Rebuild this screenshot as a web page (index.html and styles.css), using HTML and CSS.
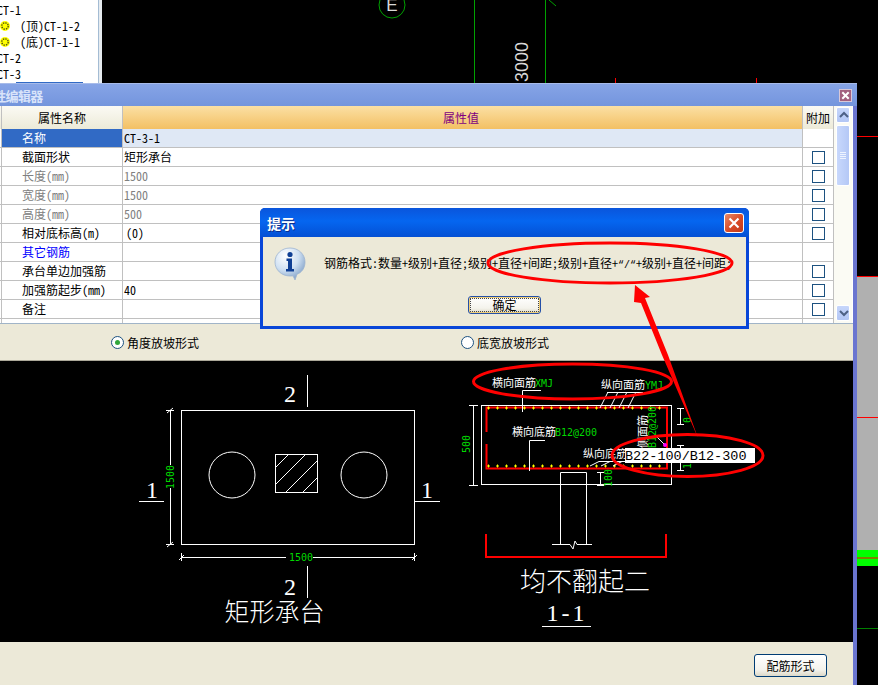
FILE: index.html
```html
<!DOCTYPE html>
<html lang="zh-CN">

<head>
    <meta charset="UTF-8">
    <meta name="viewport" content="width=device-width, initial-scale=1.0">
    <title>属性编辑器</title>
    <link rel="stylesheet" href="styles.css">
</head>

<body>
    <div class="desktop">
        <!-- 背景CAD -->
        <svg class="layer" viewBox="0 0 878 685">
            <circle class="bg-green" cx="392" cy="5" r="13" />
            <text class="bg-label" x="392" y="11" text-anchor="middle">E</text>
            <line class="bg-green" x1="474.5" y1="0" x2="474.5" y2="83" />
            <line class="bg-green" x1="545.5" y1="0" x2="545.5" y2="83" />
            <line class="bg-green" x1="549" y1="0" x2="556" y2="6" />
            <text class="bg-label big" transform="translate(528 82) rotate(-90)">3000</text>
            <line class="bg-red" x1="615.5" y1="78" x2="615.5" y2="83" />
            <line class="bg-red" x1="756.5" y1="78" x2="756.5" y2="83" />
            <line class="bg-red" x1="857" y1="136.5" x2="878" y2="136.5" />
            <rect x="857" y="276" width="21" height="274" fill="#b0b0b0" />
            <rect x="857" y="550" width="21" height="16" fill="#00ff00" />
            <line class="bg-red" x1="857" y1="276.5" x2="878" y2="276.5" />
            <line class="bg-red" x1="857" y1="417.5" x2="878" y2="417.5" />
            <line class="bg-red" x1="857" y1="558" x2="878" y2="558" />
            <line x1="857" y1="628.5" x2="878" y2="628.5" stroke="#008000" />
        </svg>

        <!-- 构件树 -->
        <div class="tree">
            <div class="tree-row">CT-1</div>
            <div class="tree-row child">
                <svg class="gear" viewBox="0 0 10 10">
                    <circle cx="5" cy="5" r="5" fill="#ffff00" />
                    <circle cx="5" cy="5" r="3.2" fill="none" stroke="#4a4a10" stroke-width="1.3" stroke-dasharray="1.5 1" />
                </svg>
                <span>(顶)CT-1-2</span>
            </div>
            <div class="tree-row child">
                <svg class="gear" viewBox="0 0 10 10">
                    <circle cx="5" cy="5" r="5" fill="#ffff00" />
                    <circle cx="5" cy="5" r="3.2" fill="none" stroke="#4a4a10" stroke-width="1.3" stroke-dasharray="1.5 1" />
                </svg>
                <span>(底)CT-1-1</span>
            </div>
            <div class="tree-row">CT-2</div>
            <div class="tree-row">CT-3</div>
            <div class="tree-selected"></div>
        </div>

        <!-- 属性编辑器窗口 -->
        <div class="editor">
            <div class="editor-title">
                <span class="editor-title-text">属性编辑器</span>
                <span class="editor-close">
                    <svg viewBox="0 0 12 12"><path d="M2.5 2.5l7 7M9.5 2.5l-7 7" /></svg>
                </span>
            </div>

            <div class="props">
                <table class="props-table">
                    <colgroup>
                        <col class="col-gutter">
                        <col class="col-name">
                        <col class="col-value">
                        <col class="col-extra">
                    </colgroup>
                    <tr class="head">
                        <th></th>
                        <th class="head-name">属性名称</th>
                        <th class="head-value">属性值</th>
                        <th class="head-extra">附加</th>
                    </tr>
                    <tr class="current">
                        <td></td>
                        <td class="name">名称</td>
                        <td class="value">CT-3-1</td>
                        <td class="extra"></td>
                    </tr>
                    <tr>
                        <td></td>
                        <td class="name">截面形状</td>
                        <td class="value">矩形承台</td>
                        <td class="extra"><span class="check"></span></td>
                    </tr>
                    <tr class="off">
                        <td></td>
                        <td class="name">长度(mm)</td>
                        <td class="value">1500</td>
                        <td class="extra"><span class="check"></span></td>
                    </tr>
                    <tr class="off">
                        <td></td>
                        <td class="name">宽度(mm)</td>
                        <td class="value">1500</td>
                        <td class="extra"><span class="check"></span></td>
                    </tr>
                    <tr class="off">
                        <td></td>
                        <td class="name">高度(mm)</td>
                        <td class="value">500</td>
                        <td class="extra"><span class="check"></span></td>
                    </tr>
                    <tr>
                        <td></td>
                        <td class="name">相对底标高(m)</td>
                        <td class="value indent">(0)</td>
                        <td class="extra"><span class="check"></span></td>
                    </tr>
                    <tr class="group">
                        <td></td>
                        <td class="name">其它钢筋</td>
                        <td class="value"></td>
                        <td class="extra"></td>
                    </tr>
                    <tr>
                        <td></td>
                        <td class="name">承台单边加强筋</td>
                        <td class="value"></td>
                        <td class="extra"><span class="check"></span></td>
                    </tr>
                    <tr>
                        <td></td>
                        <td class="name">加强筋起步(mm)</td>
                        <td class="value">40</td>
                        <td class="extra"><span class="check"></span></td>
                    </tr>
                    <tr>
                        <td></td>
                        <td class="name">备注</td>
                        <td class="value"></td>
                        <td class="extra"><span class="check"></span></td>
                    </tr>
                    <tr class="tail">
                        <td></td>
                        <td></td>
                        <td></td>
                        <td></td>
                    </tr>
                </table>
                <div class="scrollbar">
                    <span class="scroll-btn">
                        <svg viewBox="0 0 14 14"><path d="M3 9l4-4 4 4" /></svg>
                    </span>
                    <span class="scroll-thumb"><i></i><i></i><i></i><i></i></span>
                    <span class="scroll-track"></span>
                    <span class="scroll-btn">
                        <svg viewBox="0 0 14 14"><path d="M3 5l4 4 4-4" /></svg>
                    </span>
                </div>
            </div>

            <div class="radios">
                <label class="radio-opt"><span class="radio on"></span>角度放坡形式</label>
                <label class="radio-opt"><span class="radio"></span>底宽放坡形式</label>
            </div>

            <div class="cad">
                <svg class="cad-svg" viewBox="0 361 853 281">
                    <!-- 左图 矩形承台 -->
                    <g class="wire">
                        <rect x="181.5" y="410.5" width="233" height="134" />
                        <circle cx="232" cy="475" r="23" />
                        <circle cx="364" cy="475" r="23" />
                        <rect x="275.5" y="454.5" width="42" height="38" />
                        <path d="M275 468L289 454M275 485L306 454M286 492L318 460M303 492L318 477" />
                        <path d="M307.5 375V407M307.5 566V598" />
                        <path d="M139 501.5H164M415 501.5H440" />
                        <path d="M170.5 410V465M170.5 488V544M166 410.5H174M166 544.5H174M167 413L173 408M167 547L173 542" />
                        <path d="M181 557.5H286M313 557.5H414M181.5 553V561M414.5 553V561M179 560L184 555M412 560L417 555" />
                    </g>
                    <text class="num" x="290" y="402" text-anchor="middle">2</text>
                    <text class="num" x="290" y="595" text-anchor="middle">2</text>
                    <text class="num" x="152" y="498" text-anchor="middle">1</text>
                    <text class="num" x="427" y="498" text-anchor="middle">1</text>
                    <text class="dim" x="301" y="561" text-anchor="middle">1500</text>
                    <text class="dim" transform="translate(174 477) rotate(-90)" text-anchor="middle">1500</text>
                    <text class="cap" x="274.500" y="621" text-anchor="middle">矩形承台</text>

                    <!-- 右图 剖面 -->
                    <g class="rebar">
                        <path d="M486.5 432V407.5H667V468.5H486.5V444" />
                        <path d="M486 558V534M666 558V534M485 557H667" />
                    </g>
                    <line class="dots-v" x1="488" y1="408" x2="667" y2="408" />
                    <line class="dots-h" x1="487" y1="408" x2="667" y2="408" />
                    <line class="dots-v" x1="488" y1="466" x2="667" y2="466" />
                    <line class="dots-h" x1="487" y1="466" x2="667" y2="466" />
                    <g class="wire">
                        <rect x="481.5" y="405.5" width="190" height="79" />
                        <path d="M560.5 544V472.5H586.5V544M552 544.5H570L573 549L575 541L577 544.5H592" />
                        <path d="M473.5 405V485M469 405.5H478M469 485.5H478" />
                        <path d="M522.5 412V390.5H541" />
                        <path d="M607 392.5H643M600 408L608 392M610 408L618 392M619 408L627 392M628 408L636 392" />
                        <path d="M529.5 471V440.5H545" />
                        <path d="M590 466L599 461.5H625M601 466L610 461.5M613 466L622 461.5" />
                        <path d="M600.5 472V485M597 472.5H604M597 485.5H604" />
                        <path d="M680.5 408V424M677 408.5H684M677 424.5H684M680.5 445V470M677 445.5H684M677 470.5H684" />
                        <path d="M657 437L665 445" />
                    </g>
                    <circle cx="665" cy="445" r="2" fill="#ff00ff" />
                    <text class="label" x="492" y="387">横向面筋</text>
                    <text class="dim" x="535" y="387">XMJ</text>
                    <text class="label" x="601" y="389">纵向面筋</text>
                    <text class="dim" x="645" y="389">YMJ</text>
                    <text class="label" x="512" y="436">横向底筋</text>
                    <text class="dim" x="555" y="436">B12@200</text>
                    <text class="label" x="583" y="458">纵向底筋</text>
                    <text class="label" transform="translate(647 448) rotate(-90)">侧面筋</text>
                    <text class="dim" transform="translate(656 448) rotate(-90)">B12@200</text>
                    <text class="dim" transform="translate(470 444) rotate(-90)" text-anchor="middle">500</text>
                    <text class="dim" transform="translate(612 478) rotate(-90)" text-anchor="middle">100</text>
                    <text class="dim" transform="translate(691 420) rotate(-90)" text-anchor="middle">0</text>
                    <text class="dim" transform="translate(691 466) rotate(-90)" text-anchor="middle">1</text>
                    <rect x="625" y="448" width="130" height="15" fill="#fff" />
                    <text class="input-text" x="625" y="460">B22-100/B12-300</text>
                    <text class="cap wide" x="585" y="591" text-anchor="middle">均不翻起二</text>
                    <text class="num spaced" x="567" y="621" text-anchor="middle">1-1</text>
                    <path class="wire" d="M542 626.5H591" />
                </svg>
            </div>

            <div class="editor-footer">
                <button class="xp-btn rebar-btn">配筋形式</button>
            </div>
        </div>

        <!-- 提示框 -->
        <div class="dialog">
            <div class="dialog-title">
                <span>提示</span>
                <span class="dialog-close">
                    <svg viewBox="0 0 20 20"><path d="M5 5l10 10M15 5L5 15" /></svg>
                </span>
            </div>
            <div class="dialog-body">
                <div class="dialog-msg">
                    <svg class="info-icon" viewBox="0 0 32 34">
                        <defs>
                            <radialGradient id="bubble" cx="35%" cy="25%" r="80%">
                                <stop offset="0" stop-color="#ffffff" />
                                <stop offset="0.55" stop-color="#cfe0f2" />
                                <stop offset="1" stop-color="#7f9fc6" />
                            </radialGradient>
                        </defs>
                        <path d="M16 1C7.5 1 1 7.2 1 15s6.5 14 15 14c1.2 0 2 0 3-.2L21 33l2-5.800C28 25.500 31 20.800 31 15 31 7.200 24.500 1 16 1z" fill="url(#bubble)" stroke="#9db4d0" stroke-width="0.8" />
                        <circle cx="16" cy="7.500" r="2.600" fill="#0f3f94" />
                        <path d="M12.500 11.500H18V22H20V24.500H12V22H14V14H12.500z" fill="#0f3f94" />
                    </svg>
                    <p>钢筋格式:数量+级别+直径;级别+直径+间距;级别+直径+<span class="quotes">“/“</span>+级别+直径+间距;</p>
                </div>
                <button class="xp-btn ok-btn"><span>确定</span></button>
            </div>
        </div>

        <!-- 红色标注 -->
        <svg class="layer marks" viewBox="0 0 878 685">
            <ellipse cx="572.500" cy="381.500" rx="99" ry="17.500" />
            <ellipse cx="687.500" cy="455.500" rx="75.500" ry="21" />
            <ellipse cx="610" cy="263" rx="122" ry="20" />
            <polygon points="635,285 650,297 645,298 668,355 698,438 662,355 641,303 634,302" />
        </svg>
    </div>
</body>

</html>
```

FILE: styles.css
```css
html,
body {
    margin: 0;
    padding: 0;
    background: #000;
}

.desktop {
    position: relative;
    width: 878px;
    height: 685px;
    overflow: hidden;
    background: #000;
    font-family: "Noto Sans CJK SC", sans-serif;
    font-size: 12px;
    font-feature-settings: "hwid";
    color: #000;
}

.layer {
    position: absolute;
    top: 0;
    left: 0;
    width: 878px;
    height: 685px;
}

.bg-green {
    fill: none;
    stroke: #00a000;
}

.bg-red {
    stroke: #ff0000;
}

.bg-label {
    fill: #d8d8d8;
    font-family: "Liberation Sans", sans-serif;
    font-size: 17px;
}

.bg-label.big {
    font-size: 18px;
}

/* 构件树 */
.tree {
    position: absolute;
    top: 0;
    left: 0;
    width: 99px;
    height: 83px;
    padding-top: 2px;
    box-sizing: border-box;
    overflow: hidden;
    background: #fff;
    border-right: 1px solid #a4bcd4;
    box-shadow: 3px 0 0 #e6ebef;
}

.tree-row {
    display: flex;
    align-items: center;
    height: 16px;
    margin-left: -3px;
    line-height: 16px;
    white-space: nowrap;
}

.tree-row.child {
    margin-left: 0;
}

.gear {
    flex: none;
    width: 10px;
    height: 10px;
    margin-right: 10px;
}

.tree-selected {
    width: 67px;
    height: 1px;
    margin-left: 16px;
    background: #316ac5;
}

/* 属性编辑器 */
.editor {
    position: absolute;
    top: 83px;
    left: 0;
    display: flex;
    flex-direction: column;
    width: 853px;
    height: 602px;
    background: #ece9d8;
    border-right: 4px solid #6a75d0;
}

.editor-title {
    display: flex;
    align-items: center;
    justify-content: space-between;
    flex: none;
    height: 23px;
    margin-right: -4px;
    box-sizing: border-box;
    border-top: 1px solid #a7bbe9;
    background: linear-gradient(#86a4e6, #7b9be1 60%, #7495dc);
}

.editor-title-text {
    margin-left: -19px;
    color: #d9e4fa;
    font-size: 13px;
    font-weight: 700;
    letter-spacing: -0.700px;
}

.editor-close {
    display: flex;
    width: 13px;
    height: 13px;
    margin-right: 5px;
    background: #a2607f;
    border: 1px solid #d8c8d8;
    box-sizing: border-box;
}

.editor-close svg {
    width: 100%;
    height: 100%;
}

.editor-close path {
    fill: none;
    stroke: #fff;
    stroke-width: 2.200;
}

.props {
    display: flex;
    flex: none;
    height: 218px;
    overflow: hidden;
    box-sizing: border-box;
    background: #fff;
    border-bottom: 1px solid #a0b4c8;
}

.props-table {
    flex: none;
    align-self: flex-start;
    width: 834px;
    table-layout: fixed;
    border-collapse: separate;
    border-spacing: 0;
}

.col-gutter {
    width: 2px;
}

.col-name {
    width: 121px;
}

.col-value {
    width: 680px;
}

.col-extra {
    width: 31px;
}

.props-table th,
.props-table td {
    height: 18px;
    padding: 0;
    overflow: hidden;
    box-sizing: content-box;
    border-right: 1px solid #c0c0c0;
    border-bottom: 1px solid #c0c0c0;
    font-weight: 400;
    line-height: 18px;
    white-space: nowrap;
}

.props-table th:first-child,
.props-table td:first-child {
    width: 1px;
}

.head th {
    height: 23px;
    background: linear-gradient(#fbfaf4, #ecead8);
    border-bottom: 0;
    line-height: 23px;
}

.props-table .head-value {
    padding-right: 3px;
    background: linear-gradient(#fbe0a4, #f3c064);
    color: #800080;
}

.props-table .tail td {
    height: 4px;
    border-bottom: 0;
    line-height: 0;
}

.name {
    padding-left: 20px !important;
}

.value {
    padding-left: 1px !important;
}

.value.indent {
    padding-left: 3px !important;
}

.extra {
    text-align: center;
}

.current .name {
    background: #316ac5;
    color: #fff;
}

.current .value {
    background: #dfe8f5;
}

.off td {
    color: #808080;
}

.group .name {
    color: #0000ff;
}

.check {
    display: block;
    width: 11px;
    height: 11px;
    margin: 0 auto;
    margin-left: 9px;
    background: #fff;
    border: 1px solid #1c5180;
}

.scrollbar {
    display: flex;
    flex: none;
    flex-direction: column;
    width: 18px;
    box-sizing: border-box;
    padding: 1px 2px 2px;
    background: #fbfbf4;
}

.scroll-btn {
    display: block;
    flex: none;
    height: 16px;
    box-sizing: border-box;
    border: 1px solid #fff;
    border-radius: 2px;
    background: linear-gradient(#c6d6fb, #b2c6f5);
}

.scroll-btn svg {
    display: block;
    width: 14px;
    height: 14px;
}

.scroll-btn path {
    fill: none;
    stroke: #4d6185;
    stroke-width: 2;
}

.scroll-thumb {
    display: flex;
    flex: none;
    flex-direction: column;
    align-items: center;
    justify-content: center;
    gap: 1px;
    height: 61px;
    margin-top: 2px;
    box-sizing: border-box;
    border: 1px solid #fff;
    border-radius: 2px;
    background: linear-gradient(90deg, #c8d8fc, #b4c8f6);
}

.scroll-thumb i {
    display: block;
    width: 6px;
    height: 1px;
    background: #eef4ff;
}

.scroll-track {
    flex: 1;
}

.radios {
    display: flex;
    align-items: center;
    flex: none;
    height: 37px;
    padding-left: 111px;
    box-sizing: border-box;
    border-bottom: 1px solid #aca899;
}

.radio-opt {
    display: flex;
    align-items: center;
    width: 350px;
    color: #000;
}

.radio {
    display: flex;
    align-items: center;
    justify-content: center;
    width: 13px;
    height: 13px;
    margin-right: 3px;
    box-sizing: border-box;
    border: 1px solid #1c5180;
    border-radius: 50%;
    background: #fff;
}

.radio.on::after {
    content: "";
    width: 5px;
    height: 5px;
    border-radius: 50%;
    background: #31a63b;
}

.cad {
    flex: none;
    height: 281px;
    background: #000;
}

.cad-svg {
    display: block;
    width: 853px;
    height: 281px;
}

.wire {
    fill: none;
    stroke: #fff;
}

.wire path {
    stroke-width: 1;
}

.rebar {
    fill: none;
    stroke: #ff0000;
    stroke-width: 2;
}

.dots-v {
    stroke: #ffff00;
    stroke-width: 3;
    stroke-dasharray: 1 8;
}

.dots-h {
    stroke: #ffff00;
    stroke-width: 1;
    stroke-dasharray: 3 6;
}

.num {
    fill: #fff;
    font-family: "Liberation Serif", serif;
    font-size: 24px;
}

.num.spaced {
    letter-spacing: 3px;
}

.cap {
    fill: #fff;
    font-size: 25px;
    font-weight: 300;
    font-feature-settings: normal;
}

.cap.wide {
    font-size: 26px;
}

.dim {
    fill: #00d800;
    font-family: "DejaVu Sans Mono", monospace;
    font-size: 10px;
}

.label {
    fill: #fff;
    font-size: 11px;
}

.input-text {
    fill: #000;
    font-family: "Liberation Mono", monospace;
    font-size: 13.500px;
}

.editor-footer {
    display: flex;
    align-items: flex-start;
    justify-content: flex-end;
    flex: 1;
    padding: 12px 26px 0 0;
}

.xp-btn {
    padding: 0;
    border: 1px solid #003c74;
    border-radius: 3px;
    background: linear-gradient(#ffffff, #f4f3ec 70%, #dcd8c8);
    color: #000;
    font: inherit;
    font-feature-settings: inherit;
}

.rebar-btn {
    width: 73px;
    height: 23px;
}

/* 提示框 */
.dialog {
    position: absolute;
    top: 208px;
    left: 260px;
    display: flex;
    flex-direction: column;
    width: 489px;
    height: 121px;
    box-sizing: border-box;
    border-radius: 5px 5px 0 0;
    background: #0846d8;
}

.dialog-title {
    display: flex;
    align-items: center;
    justify-content: space-between;
    flex: none;
    height: 29px;
    padding: 0 5px 0 7px;
    border-radius: 5px 5px 0 0;
    background: linear-gradient(#0a55dc, #0566f0 45%, #0450d4);
    color: #fff;
    font-size: 14px;
    font-weight: 700;
    text-shadow: 1px 1px 0 #0a2f90;
}

.dialog-close {
    display: flex;
    width: 20px;
    height: 20px;
    box-sizing: border-box;
    border: 1px solid #fff;
    border-radius: 3px;
    background: linear-gradient(135deg, #e88a68, #d84a26 55%, #c03a1c);
}

.dialog-close svg {
    width: 18px;
    height: 18px;
}

.dialog-close path {
    fill: none;
    stroke: #fff;
    stroke-width: 2.400;
}

.dialog-body {
    display: flex;
    flex-direction: column;
    flex: 1;
    align-items: center;
    margin: 0 3px 3px;
    background: #ece9d8;
}

.dialog-msg {
    display: flex;
    align-items: flex-start;
    align-self: stretch;
    height: 59px;
    padding: 10px 0 0 11px;
    box-sizing: border-box;
}

.info-icon {
    flex: none;
    width: 32px;
    height: 34px;
    margin-right: 18px;
}

.dialog-msg p {
    margin: 7px 0 0;
    line-height: 18px;
    white-space: nowrap;
}

.quotes {
    font-family: "Liberation Mono", monospace;
    font-size: 10px;
}

.ok-btn {
    width: 73px;
    height: 18px;
    border-color: #2450a8;
    line-height: 14px;
    box-shadow: inset 0 0 0 1px #f0ce78;
}

.ok-btn span {
    display: block;
    margin: 1px;
    border: 1px dotted #444;
    line-height: 12px;
}

/* 红色标注 */
.marks {
    pointer-events: none;
}

.marks ellipse {
    fill: none;
    stroke: #ff0000;
    stroke-width: 3;
}

.marks polygon {
    fill: #ff0000;
}
```
